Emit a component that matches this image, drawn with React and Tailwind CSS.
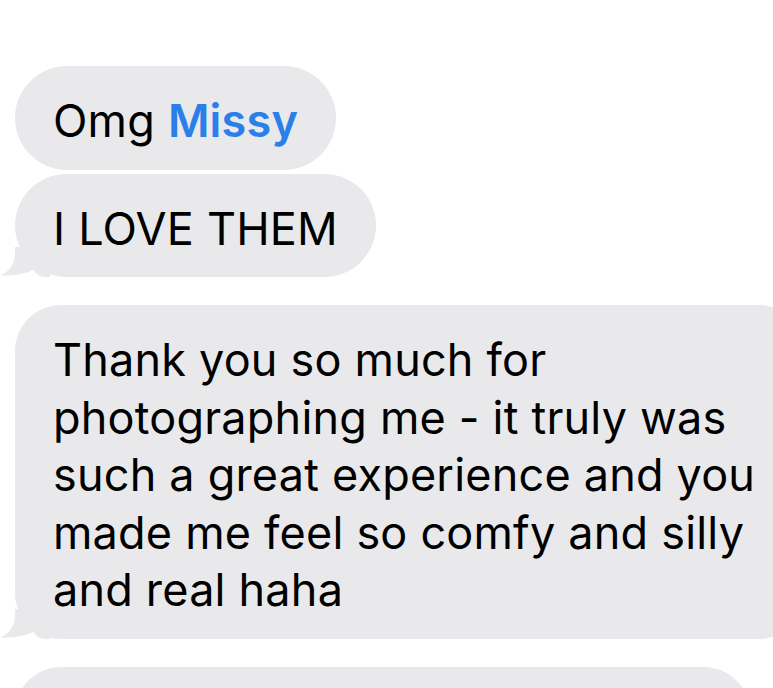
import React from 'react';

const Tail = () => (
  <svg
    className="absolute left-[-15px] bottom-0"
    width="50"
    height="30"
    viewBox="0 0 50 30"
  >
    <path
      d="M15 0 L50 0 L50 30 L46 30 C40 30 36 27 33 22.5 C26 27 14 29 0.5 28.5 C10 24 15 17 15 5 Z"
      fill="#e9e9eb"
    />
  </svg>
);

const Bubble = ({ children, tail, className = '' }) => (
  <div
    className={`relative bg-[#e9e9eb] px-[38px] pt-[26px] pb-[20px] ${className}`}
  >
    {children}
    {tail && <Tail />}
  </div>
);

const App = () => {
  return (
    <div
      className="w-[773px] h-[688px] overflow-hidden bg-white text-black"
      style={{ fontFamily: 'Inter, "Noto Sans", sans-serif' }}
    >
      <div className="flex flex-col items-start pl-[15px] pt-[66px] text-[45px] leading-[57.5px] tracking-[0.2px]">
        {/* received messages */}
        <Bubble className="rounded-[52px]">
          Omg <span className="text-[#2b7fe8] font-semibold">Missy</span>
        </Bubble>
        <Bubble tail className="mt-[4px] rounded-[52px]">
          I LOVE THEM
        </Bubble>

        <Bubble tail className="mt-[28px] w-[790px] rounded-[46px]">
          Thank you so much for
          <br />
          photographing me - it truly was
          <br />
          such a great experience and you
          <br />
          made me feel so comfy and silly
          <br />
          and real haha
        </Bubble>

        <div className="mt-[28px] w-[735px] h-[100px] bg-[#e9e9eb] rounded-[46px]" />
      </div>
    </div>
  );
};

export default App;
